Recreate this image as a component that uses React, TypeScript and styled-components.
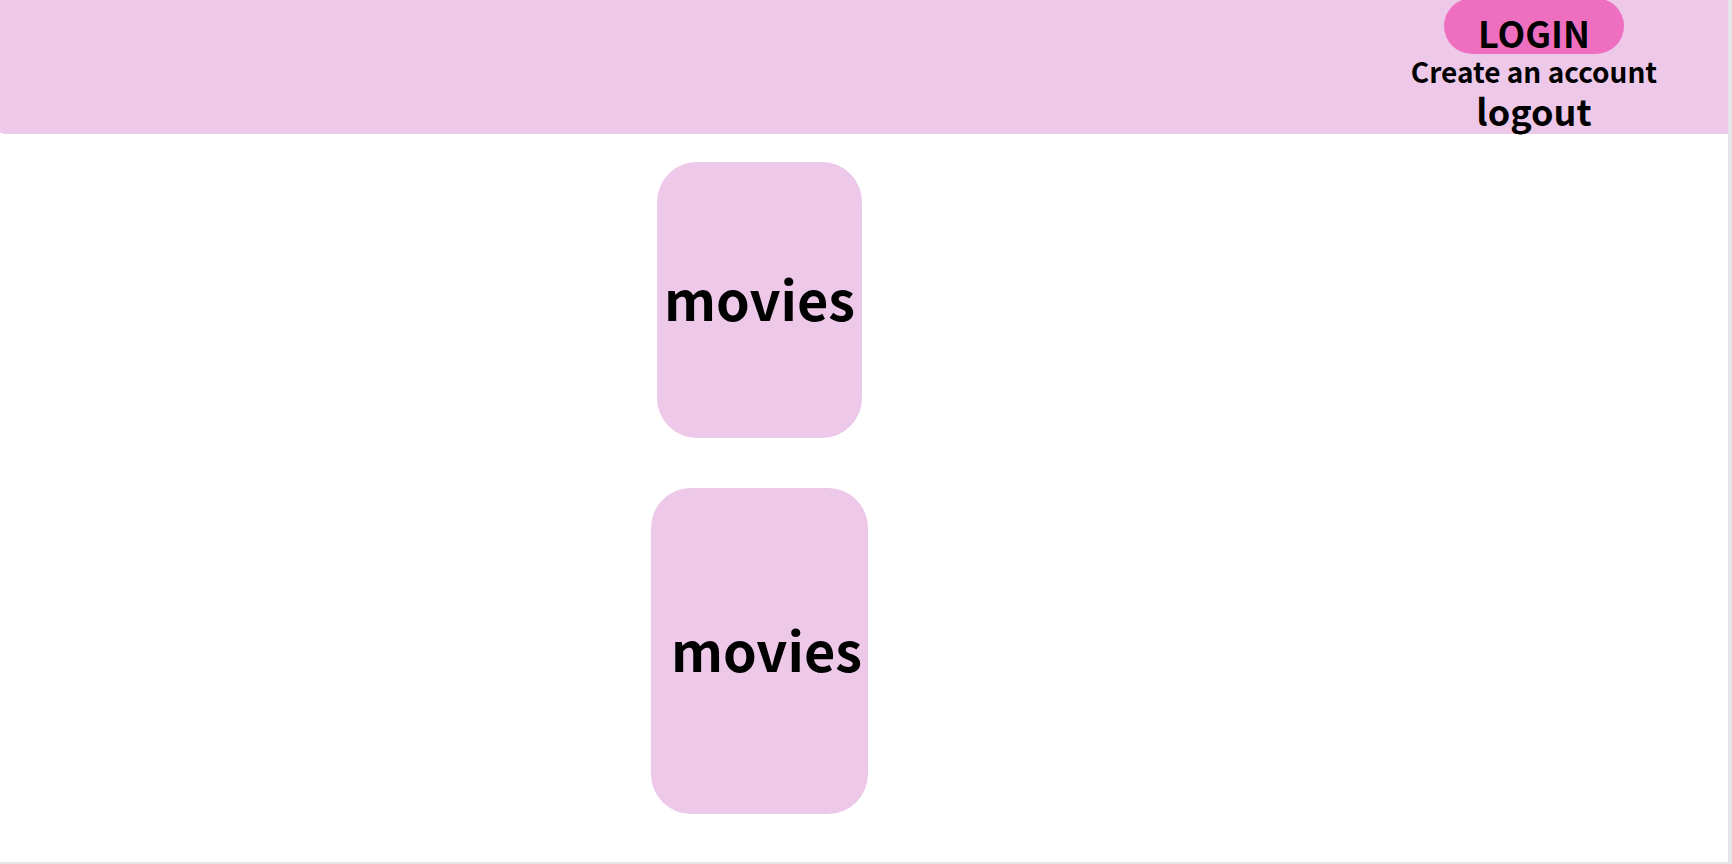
import React from "react";
import styled, { createGlobalStyle } from "styled-components";

const GlobalStyle = createGlobalStyle`
  *, *::before, *::after {
    box-sizing: border-box;
  }
  body {
    margin: 0;
    background: #ffffff;
    color: #000000;
    font-family: "Noto Sans CJK SC", "Noto Sans", sans-serif;
    font-weight: 700;
  }
`;

const Page = styled.div`
  display: flex;
  flex-direction: column;
  min-height: 100vh;
  overflow: hidden;
  border-right: 4px solid #e4e4e9;
  border-bottom: 2px solid #e4e4e9;
`;

const Header = styled.header`
  display: flex;
  justify-content: flex-end;
  height: 134px;
  padding-right: 64px;
  background: #edc8e9;
  border-bottom-left-radius: 8px 2px;
`;

const AccountNav = styled.nav`
  display: flex;
  flex-direction: column;
  align-items: center;
  width: 260px;
`;

const LoginButton = styled.button`
  flex: none;
  width: 180px;
  height: 56px;
  margin-top: -2px;
  padding: 12px 0 0;
  border: 0;
  border-radius: 28px;
  background: #ee6fc0;
  color: inherit;
  font: inherit;
  font-size: 36px;
  line-height: 40px;
  cursor: pointer;
`;

const AccountLink = styled.a<{ $large?: boolean }>`
  color: inherit;
  font-size: ${(p) => (p.$large ? 36 : 28)}px;
  line-height: ${(p) => (p.$large ? 44 : 34)}px;
  text-decoration: none;
  white-space: nowrap;
`;

const Categories = styled.main`
  flex: 1;
  display: flex;
  flex-direction: column;
  align-items: center;
  gap: 50px;
  padding: 28px 209px 48px 0;
`;

const CategoryCard = styled.a<{ $large?: boolean }>`
  display: flex;
  align-items: center;
  justify-content: ${(p) => (p.$large ? "flex-end" : "center")};
  width: ${(p) => (p.$large ? 217 : 205)}px;
  height: ${(p) => (p.$large ? 326 : 276)}px;
  padding-right: ${(p) => (p.$large ? 6 : 0)}px;
  padding-bottom: 4px;
  border-radius: 40px;
  background: #edc8e9;
  color: inherit;
  font-size: 54px;
  line-height: 64px;
  text-decoration: none;
`;

export default function App() {
  return (
    <>
      <GlobalStyle />
      <Page>
        <Header>
          <AccountNav aria-label="Account">
            <LoginButton type="button">LOGIN</LoginButton>
            <AccountLink href="#create-account">Create an account</AccountLink>
            <AccountLink href="#logout" $large>
              logout
            </AccountLink>
          </AccountNav>
        </Header>
        <Categories>
          <CategoryCard href="#movies">movies</CategoryCard>
          <CategoryCard href="#more-movies" $large>
            movies
          </CategoryCard>
        </Categories>
      </Page>
    </>
  );
}
